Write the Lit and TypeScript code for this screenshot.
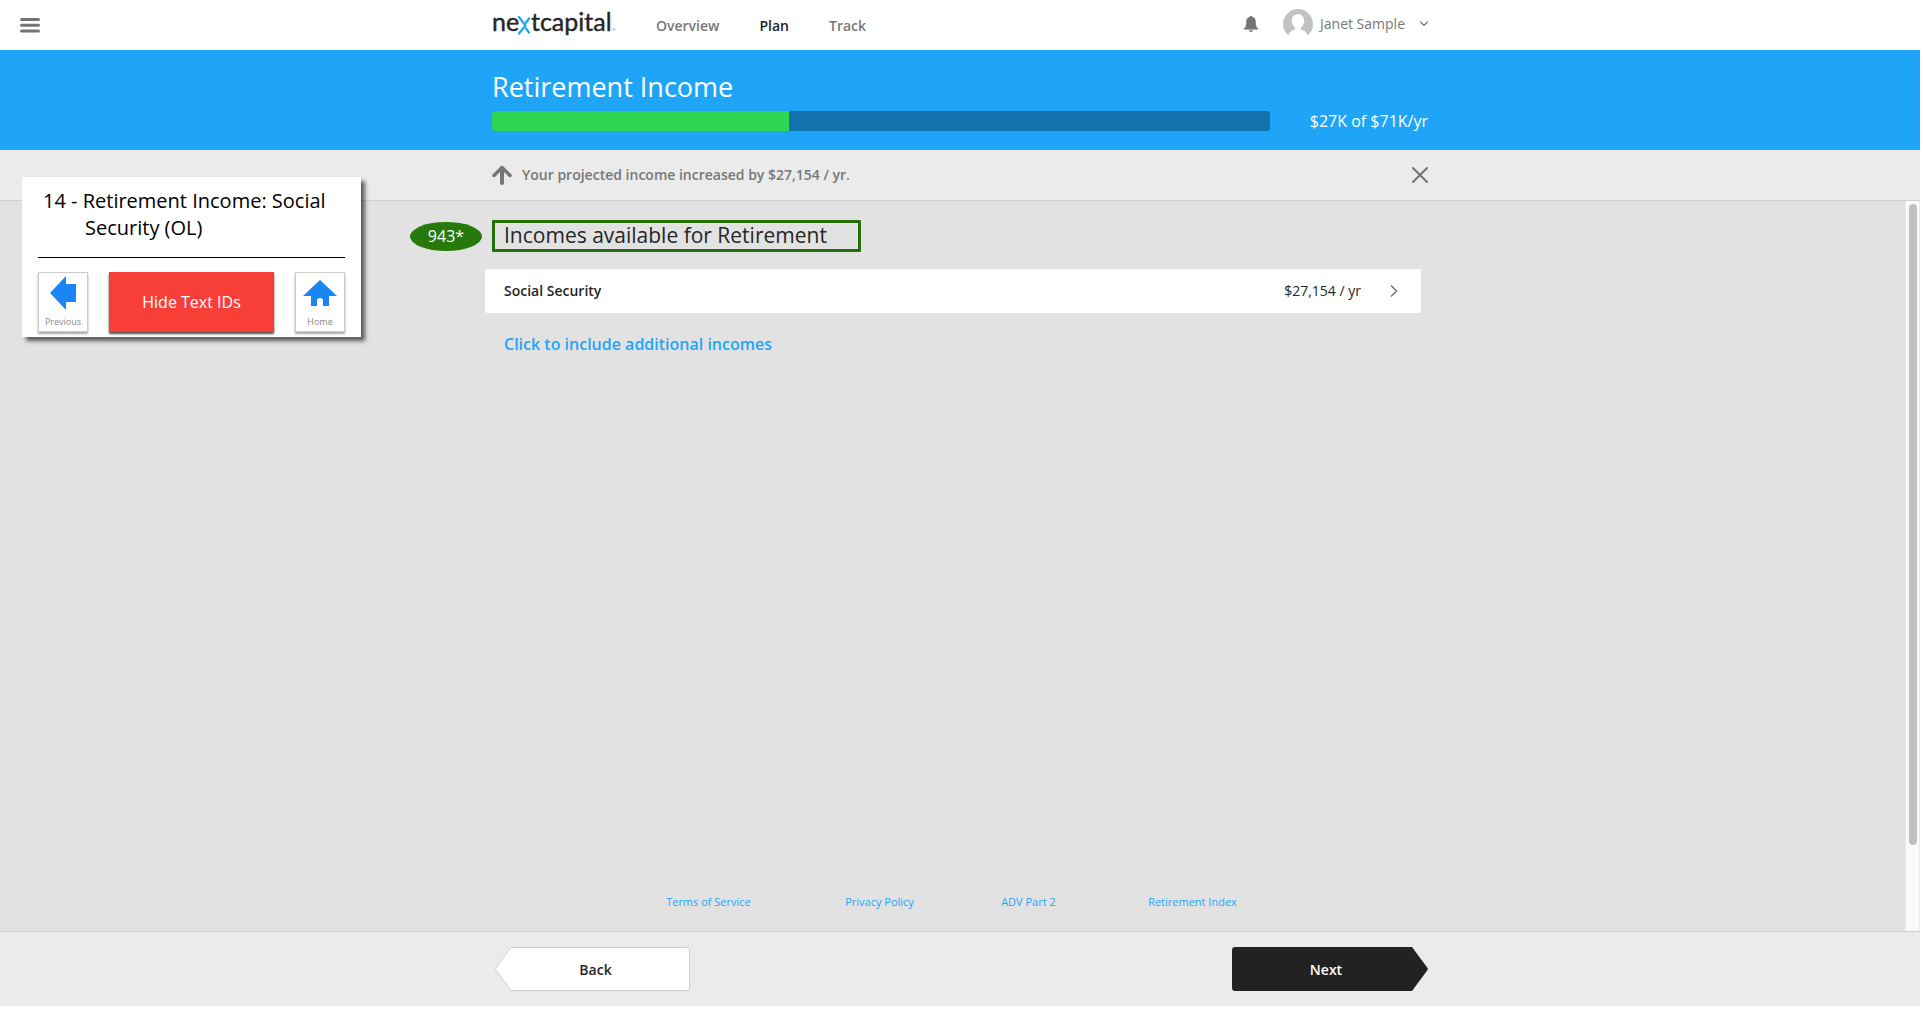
import { LitElement, html, css } from "lit";
import { customElement, property, state } from "lit/decorators.js";

const shared = css`
  *,
  *::before,
  *::after {
    box-sizing: border-box;
  }
  button {
    font: inherit;
    color: inherit;
    background: none;
    border: 0;
    padding: 0;
    margin: 0;
    cursor: pointer;
  }
  a {
    color: inherit;
    text-decoration: none;
  }
  svg {
    display: block;
    flex: none;
  }
  h1,
  h2,
  p {
    margin: 0;
    padding: 0;
    font-weight: inherit;
  }
`;

@customElement("site-header")
class SiteHeader extends LitElement {
  static styles = [
    shared,
    css`
      :host {
        display: block;
      }
      .bar {
        display: grid;
        grid-template-columns: 1fr minmax(auto, 936px) 1fr;
        align-items: center;
        height: 50px;
        background: #fff;
      }
      .menu {
        justify-self: start;
        margin-left: 20px;
      }
      .content {
        display: flex;
        align-items: center;
        gap: 40px;
      }
      .nav {
        display: flex;
        gap: 40px;
        flex: 1;
        padding-top: 2px;
        font-weight: 600;
        color: #777;
      }
      .current {
        color: #222;
      }
      .user {
        display: flex;
        align-items: center;
        gap: 24px;
        padding-bottom: 2px;
      }
      .account {
        display: flex;
        align-items: center;
        gap: 7px;
        color: #777;
      }
      .chevron {
        margin-left: 8px;
      }
    `,
  ];

  render() {
    return html`
      <header class="bar">
        <button class="menu" aria-label="Menu">
          <svg width="20" height="16" viewBox="0 0 20 16" stroke="#757575" stroke-width="3" stroke-linecap="round">
            <path d="M1.5 2.500h17M1.500 8.300h17M1.500 14h17" />
          </svg>
        </button>
        <div class="content">
          <a href="#" aria-label="nextcapital">
            <svg width="124" height="40" viewBox="0 0 124 40" font-family="Lato, sans-serif" font-size="25" fill="#262626">
              <text x="0" y="26" stroke="#262626" stroke-width=".4">ne</text>
              <path d="M27 12l6.500 8.500L27 28.500M37 13.500l-3 4M34 23.500l3 4" fill="none" stroke="#1fa5f7" stroke-width="2.200" stroke-linecap="round" />
              <text x="39" y="26" stroke="#262626" stroke-width=".4">tcapital</text>
              <text x="119" y="26" font-size="3" fill="#999">TM</text>
            </svg>
          </a>
          <nav class="nav">
            <a href="#overview">Overview</a>
            <a href="#plan" class="current" aria-current="page">Plan</a>
            <a href="#track">Track</a>
          </nav>
          <div class="user">
            <button aria-label="Notifications">
              <svg width="16" height="16" viewBox="0 0 16 16" fill="#757575">
                <path d="M6.300 1Q6.500 0 8 0t1.700 1C12 1.600 12.700 3.500 12.700 6c0 3.500.8 5.500 2.600 6.700V13.500H.700v-.8C2.500 11.500 3.300 9.500 3.300 6c0-2.500.7-4.400 3-5z" />
                <path d="M5.700 14.300h4.600Q9.800 16 8 16t-2.300-1.700z" />
              </svg>
            </button>
            <button class="account">
              <svg width="30" height="30" viewBox="0 0 30 30">
                <circle cx="15" cy="15" r="15" fill="#c2c2c2" />
                <path d="M4.500 30C5 24 8 21.500 12 20.500v-2C9.800 17 8.800 14.500 8.800 12c0-4.200 2.400-6.800 6.200-6.800s6.200 2.600 6.200 6.800c0 2.500-1 5-3.200 6.500v2c4 1 7 3.500 7.500 9.500z" fill="#fff" />
              </svg>
              <span>Janet Sample</span>
              <svg class="chevron" width="8" height="6" viewBox="0 0 8 6" fill="none" stroke="#757575" stroke-width="1.200" stroke-linecap="round">
                <path d="M.5 1L4 4.500 7.500 1" />
              </svg>
            </button>
          </div>
        </div>
      </header>
    `;
  }
}

@customElement("income-progress")
class IncomeProgress extends LitElement {
  @property({ type: Number }) percent = 0;

  static styles = [
    shared,
    css`
      :host {
        display: block;
        background: #1fa5f7;
        color: #fff;
      }
      .content {
        max-width: 936px;
        height: 100px;
        margin: 0 auto;
        padding-top: 18px;
      }
      .title {
        font-size: 27px;
        line-height: 37px;
      }
      .row {
        display: flex;
        align-items: center;
        gap: 40px;
        margin-top: 5px;
        font-size: 16px;
        line-height: 22px;
      }
      .track {
        flex: 1;
        height: 20px;
        border-radius: 3px;
        overflow: hidden;
        background: #1272ad;
      }
      .fill {
        height: 100%;
        background: #2ed653;
      }
    `,
  ];

  render() {
    return html`
      <section class="content">
        <h1 class="title">Retirement Income</h1>
        <div class="row">
          <div class="track" role="progressbar" aria-label="Retirement Income" aria-valuenow=${this.percent}>
            <div class="fill" style="width:${this.percent}%"></div>
          </div>
          <span>$27K of $71K/yr</span>
        </div>
      </section>
    `;
  }
}

@customElement("income-notice")
class IncomeNotice extends LitElement {
  static styles = [
    shared,
    css`
      :host {
        display: block;
        background: #ebebeb;
        border-bottom: 1px solid #cfcfcf;
      }
      .content {
        display: flex;
        align-items: center;
        gap: 10px;
        max-width: 936px;
        height: 50px;
        margin: 0 auto;
        font-weight: 600;
        color: #777;
      }
      .text {
        flex: 1;
      }
    `,
  ];

  render() {
    return html`
      <div class="content" role="status">
        <svg width="20" height="20" viewBox="0 0 20 20" fill="none" stroke="#757575" stroke-width="4" stroke-linecap="round" stroke-linejoin="round">
          <path d="M10 18V3" />
          <path d="M2 10.500l8-8 8 8" stroke-width="3.500" />
        </svg>
        <p class="text">Your projected income increased by $27,154 / yr.</p>
        <button aria-label="Dismiss">
          <svg width="16" height="16" viewBox="0 0 16 16" stroke="#757575" stroke-width="2" stroke-linecap="round">
            <path d="M1 1l14 14M15 1L1 15" />
          </svg>
        </button>
      </div>
    `;
  }
}

@customElement("income-list")
class IncomeList extends LitElement {
  static styles = [
    shared,
    css`
      :host {
        display: flex;
        flex-direction: column;
        padding: 19px 0 22px;
      }
      .content {
        width: 100%;
        max-width: 936px;
        margin: 0 auto;
        flex: 1;
      }
      .heading-row {
        display: flex;
        align-items: center;
        gap: 10px;
        margin-left: -82px;
      }
      .badge {
        width: 72px;
        border-radius: 50%;
        background: #27790b;
        color: #fff;
        font-size: 16px;
        line-height: 29px;
        text-align: center;
      }
      .heading {
        border: 3px solid #246f0b;
        border-radius: 1px;
        padding: 0 31px 2px 9px;
        font-size: 21px;
        line-height: 24px;
        color: #262626;
      }
      .income {
        display: flex;
        align-items: center;
        gap: 29px;
        width: 100%;
        height: 44px;
        margin: 17px 0 20px -7px;
        padding: 0 23px 0 19px;
        border-radius: 3px;
        background: #fff;
        color: #262626;
        text-align: left;
      }
      .name {
        flex: 1;
        font-weight: 600;
      }
      .add {
        margin-left: 12px;
        font-size: 16px;
        line-height: 22px;
        font-weight: 600;
        color: #1fa5f7;
      }
      .legal {
        display: grid;
        grid-template-columns: 179px 156px 147px auto;
        margin: 0 auto;
        padding-right: 17px;
        font-size: 11px;
        line-height: 15px;
        color: #1fa5f7;
      }
    `,
  ];

  render() {
    return html`
      <div class="content">
        <div class="heading-row">
          <span class="badge">943*</span>
          <h2 class="heading">Incomes available for Retirement</h2>
        </div>
        <button class="income">
          <span class="name">Social Security</span>
          <span>$27,154 / yr</span>
          <svg width="8" height="12" viewBox="0 0 8 12" fill="none" stroke="#757575" stroke-width="1.500">
            <path d="M1 .5L6.500 6 1 11.500" />
          </svg>
        </button>
        <button class="add">Click to include additional incomes</button>
      </div>
      <footer class="legal">
        <a href="#terms">Terms of Service</a>
        <a href="#privacy">Privacy Policy</a>
        <a href="#adv">ADV Part 2</a>
        <a href="#index">Retirement Index</a>
      </footer>
    `;
  }
}

@customElement("step-footer")
class StepFooter extends LitElement {
  static styles = [
    shared,
    css`
      :host {
        display: block;
        background: #ebebeb;
        border-top: 1px solid #cfcfcf;
      }
      .content {
        display: flex;
        justify-content: space-between;
        max-width: 936px;
        margin: 0 auto;
        padding: 15px 0 15px 3px;
      }
      .step {
        position: relative;
        width: 196px;
        height: 44px;
        padding-top: 2px;
        font-weight: 600;
      }
      .shape {
        position: absolute;
        inset: 0;
      }
      .label {
        position: relative;
      }
      .back {
        padding-left: 5px;
        color: #262626;
      }
      .next {
        padding-right: 8px;
        color: #fff;
      }
    `,
  ];

  render() {
    return html`
      <div class="content">
        <button class="step back">
          <svg class="shape" width="196" height="44" viewBox="0 0 196 44" fill="#fff" stroke="#cfcfcf">
            <path d="M16 .5H192.500a2 2 0 0 1 2 2V41.500a2 2 0 0 1-2 2H16L.8 22.800Q.3 22 .8 21.200L15 1.500z" />
          </svg>
          <span class="label">Back</span>
        </button>
        <button class="step next">
          <svg class="shape" width="196" height="44" viewBox="0 0 196 44" fill="#222">
            <path d="M3 0H180L195.500 21Q196 22 195.500 23L180 44H3a3 3 0 0 1-3-3V3a3 3 0 0 1 3-3z" />
          </svg>
          <span class="label">Next</span>
        </button>
      </div>
    `;
  }
}

@customElement("screen-navigator")
class ScreenNavigator extends LitElement {
  static styles = [
    shared,
    css`
      :host {
        display: block;
        width: 339px;
        padding: 10px 16px 5px;
        background: #fff;
        box-shadow: 4px 4px 4px rgba(0, 0, 0, 0.6);
      }
      .title {
        padding: 0 0 16px 47px;
        text-indent: -42px;
        font-size: 20px;
        line-height: 27px;
        color: #000;
        border-bottom: 1px solid #000;
      }
      .buttons {
        display: grid;
        grid-template-columns: 50px 1fr 50px;
        gap: 21px;
        height: 60px;
        margin-top: 14px;
      }
      .tile {
        display: flex;
        flex-direction: column;
        align-items: center;
        justify-content: flex-end;
        gap: 5px;
        padding-bottom: 3px;
        border: 1px solid #ccc;
        background: #fff;
        box-shadow: 0 2px 2px rgba(0, 0, 0, 0.35);
        font-size: 9px;
        line-height: 13px;
        color: #888;
      }
      .toggle {
        background: #f73e37;
        color: #fff;
        font-size: 16px;
        box-shadow: 0 2px 2px rgba(0, 0, 0, 0.7);
      }
    `,
  ];

  render() {
    return html`
      <p class="title">14 - Retirement Income: Social Security (OL)</p>
      <div class="buttons">
        <button class="tile">
          <svg width="26" height="34" viewBox="0 0 26 34" fill="#1a86f3">
            <path d="M0 17L16 0V8H26V26H16V34z" />
          </svg>
          Previous
        </button>
        <button class="toggle">Hide Text IDs</button>
        <button class="tile">
          <svg width="34" height="34" viewBox="0 0 34 34" fill="#1a86f3">
            <path d="M17 4L34 20H26V30H20V25a3 3 0 0 0-6 0V30H8V20H0z" />
          </svg>
          Home
        </button>
      </div>
    `;
  }
}

@customElement("app-root")
class AppRoot extends LitElement {
  @state() private percent = 38.2;

  static styles = [
    shared,
    css`
      :host {
        display: flex;
        flex-direction: column;
        box-sizing: border-box;
        position: relative;
        min-height: 100vh;
        padding: 0 4px 4px 0;
        background: #fff;
        font-family: "Open Sans", "Noto Sans", sans-serif;
        font-size: 14px;
        line-height: 20px;
      }
      .main {
        position: relative;
        display: flex;
        flex: 1;
        background: #e2e2e2;
      }
      .list {
        flex: 1;
      }
      .scrollbar {
        position: absolute;
        top: 0;
        right: 0;
        bottom: 0;
        width: 15px;
        padding: 3px 2px 3px 3px;
        background: #fafafa;
        border: solid #ececec;
        border-width: 0 1px;
      }
      .thumb {
        width: 8px;
        height: calc(100% - 83px);
        border-radius: 4px;
        background: #c0c0c0;
      }
      .navigator {
        position: absolute;
        left: 22px;
        top: 177px;
      }
    `,
  ];

  render() {
    return html`
      <site-header></site-header>
      <income-progress .percent=${this.percent}></income-progress>
      <income-notice></income-notice>
      <main class="main">
        <income-list class="list"></income-list>
        <div class="scrollbar"><div class="thumb"></div></div>
      </main>
      <step-footer></step-footer>
      <screen-navigator class="navigator"></screen-navigator>
    `;
  }
}
